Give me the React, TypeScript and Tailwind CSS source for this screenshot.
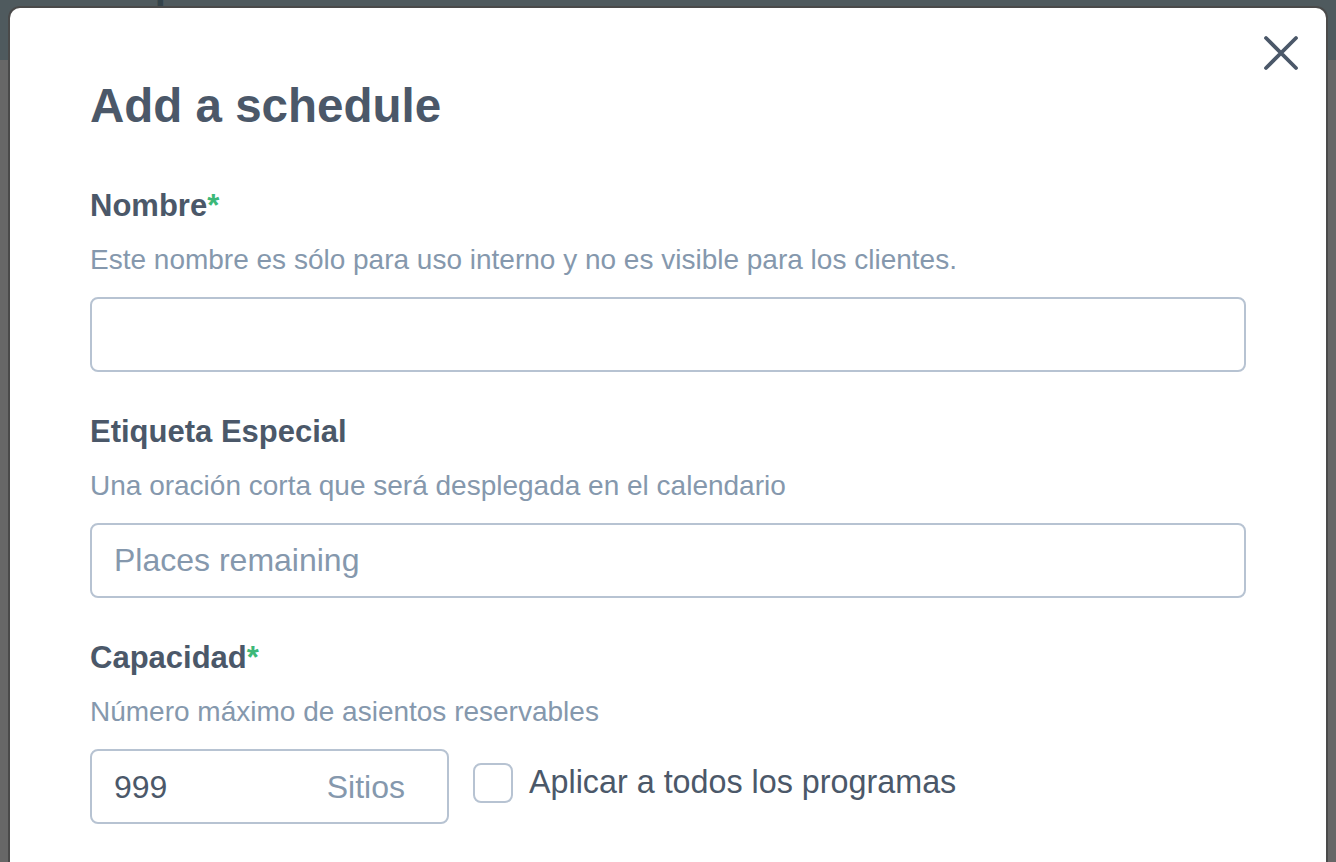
import React from 'react';

function CloseIcon() {
  return (
    <svg className="w-[36px] h-[36px]" viewBox="0 0 36 36" fill="none" stroke="currentColor" strokeWidth={3.8} strokeLinecap="round">
      <path d="M3 3l30 30M33 3L3 33" />
    </svg>
  );
}

function FieldLabel({ text, required }: { text: string; required?: boolean }) {
  return (
    <div className="text-[31px] leading-[30px] font-bold text-[#4b5869]">
      {text}
      {required && <span className="text-[#3cb878]">*</span>}
    </div>
  );
}

function FieldHelp({ text }: { text: string }) {
  return <div className="mt-[25px] text-[28px] leading-[28px] text-[#8598ad]">{text}</div>;
}

export default function App() {
  return (
    <div
      className="relative h-[862px] w-[1336px] overflow-hidden bg-[#676767]"
      style={{ fontFamily: '"Liberation Sans", Arial, sans-serif' }}
    >
      {/* page behind the overlay */}
      <div className="h-[60px] bg-[#4f5a5e] overflow-hidden">
        <div className="-mt-[34px] pl-[48px] text-[40px] leading-[40px] font-bold text-[#34434a]">Inscripciones</div>
      </div>

      {/* modal */}
      <div className="absolute left-[10px] right-[10px] top-[8px] -bottom-[40px] rounded-t-[10px] bg-white shadow-[0_0_0_2px_#4a4a4a]">
        <button className="absolute right-[27px] top-[27px] text-[#4b5869]" aria-label="Close">
          <CloseIcon />
        </button>

        <div className="pl-[80px] pr-[80px] pt-[74px]">
          <h1 className="text-[47.5px] leading-[47px] font-bold text-[#4b5869]">Add a schedule</h1>

          <div className="mt-[62px]">
            <FieldLabel text="Nombre" required />
            <FieldHelp text="Este nombre es sólo para uso interno y no es visible para los clientes." />
            <input
              className="mt-[23px] block h-[75px] w-full rounded-[8px] border-2 border-[#b7c3d2] bg-white px-[22px] text-[32px] text-[#4b5869] outline-none"
            />
          </div>

          <div className="mt-[45px]">
            <FieldLabel text="Etiqueta Especial" />
            <FieldHelp text="Una oración corta que será desplegada en el calendario" />
            <input
              placeholder="Places remaining"
              className="mt-[23px] block h-[75px] w-full rounded-[8px] border-2 border-[#b7c3d2] bg-white px-[22px] text-[32px] text-[#4b5869] placeholder:text-[#8598ad] outline-none"
            />
          </div>

          <div className="mt-[45px]">
            <FieldLabel text="Capacidad" required />
            <FieldHelp text="Número máximo de asientos reservables" />
            <div className="mt-[23px] flex items-center gap-[24px]">
              <div className="flex h-[75px] w-[359px] items-center justify-between rounded-[8px] border-2 border-[#b7c3d2] px-[22px] text-[32px]">
                <span className="text-[#4b5869]">999</span>
                <span className="text-[#8598ad] pr-[20px]">Sitios</span>
              </div>
              <label className="-mt-[8px] flex items-center gap-[16px] text-[32.3px] text-[#4b5869]">
                <span className="h-[40px] w-[40px] rounded-[8px] border-2 border-[#b7c3d2] bg-white" />
                Aplicar a todos los programas
              </label>
            </div>
          </div>
        </div>
      </div>
    </div>
  );
}
